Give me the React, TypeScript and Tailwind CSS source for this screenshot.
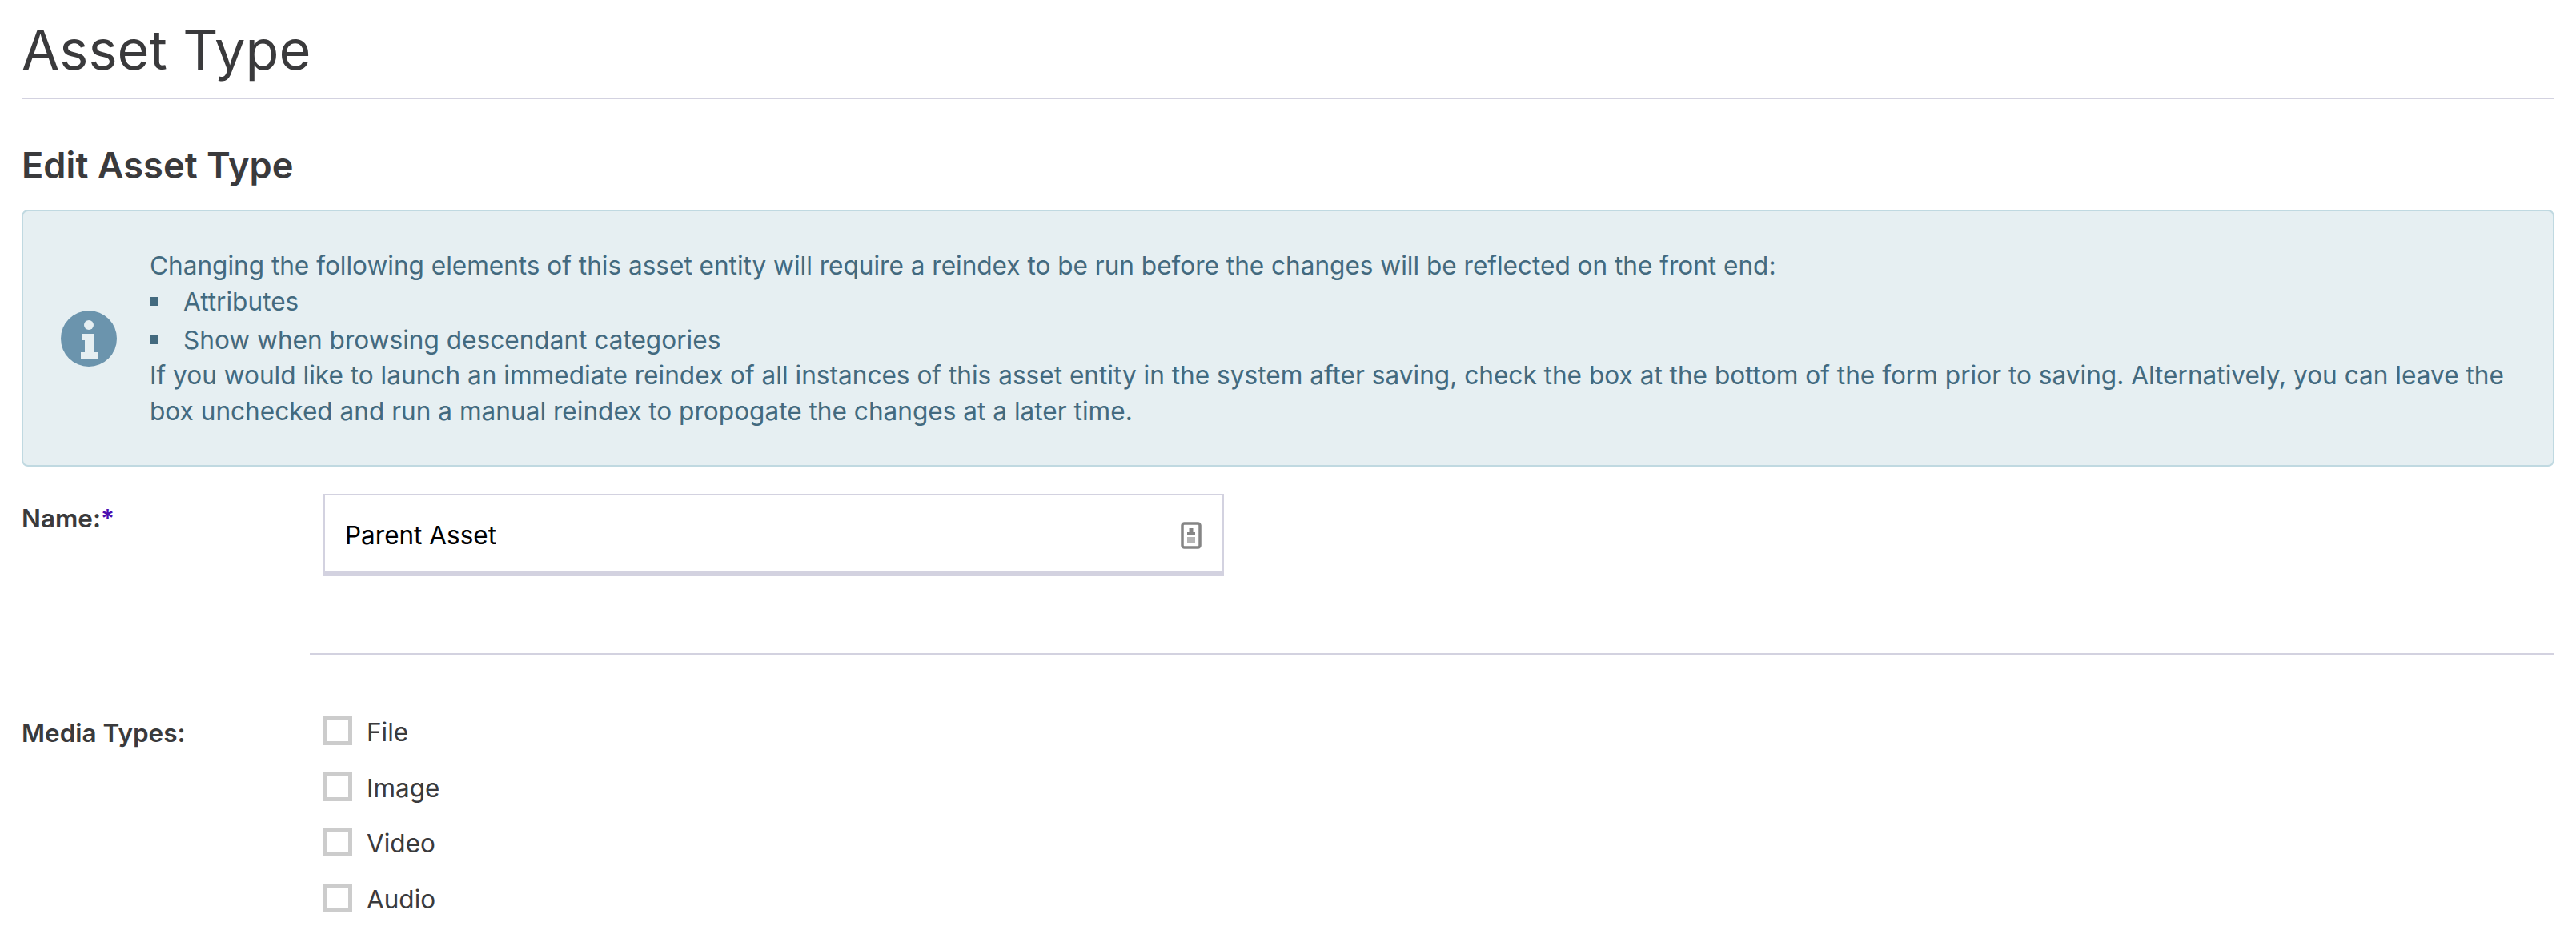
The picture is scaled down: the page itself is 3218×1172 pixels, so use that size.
export default function App() {
  const font = { fontFamily: 'Inter, "Liberation Sans", sans-serif' };
  return (
    <div style={font} className="w-[3218px] h-[1172px] overflow-hidden bg-white pl-[27px] pr-[27px] text-[#3a3a3c]">
      <h1 className="h-[124px] border-b-[2px] border-[#d3d2e0] pt-[25px] text-[68.5px] leading-[76px] font-normal">Asset Type</h1>
      <h2 className="mt-[57px] text-[45.2px] leading-[52px] font-semibold">Edit Asset Type</h2>
      <div className="mt-[29px] flex h-[321px] items-center rounded-[8px] border-[2px] border-[#c0d9e1] bg-[#e6eff2] pl-[46px] pr-[46px] text-[31.6px] leading-[45px] text-[#436a7f]">
        <svg className="mr-[40px] h-[72px] w-[72px] shrink-0" viewBox="0 0 72 72">
          <circle cx="36" cy="36" r="35" fill="#6b94ad" />
          <circle cx="36" cy="19" r="6" fill="#e6eff2" />
          <path d="M27 30h15v23h5v8H26v-8h5V38h-4z" fill="#e6eff2" />
        </svg>
        <div className="min-w-0 flex-1">
          <div className="text-[31.55px]">Changing the following elements of this asset entity will require a reindex to be run before the changes will be reflected on the front end:</div>
          <ul className="list-none">
            <li className="flex h-[44px] items-center"><span className="mr-[31px] h-[11px] w-[11px] bg-[#436a7f]" />Attributes</li>
            <li className="mt-[4px] flex h-[45px] items-center"><span className="mr-[31px] h-[11px] w-[11px] bg-[#436a7f]" />Show when browsing descendant categories</li>
          </ul>
          <div className="leading-[44.5px]">If you would like to launch an immediate reindex of all instances of this asset entity in the system after saving, check the box at the bottom of the form prior to saving. Alternatively, you can leave the box unchecked and run a manual reindex to propogate the changes at a later time.</div>
        </div>
      </div>
      <div className="mt-[34px] flex">
        <div className="w-[377px] shrink-0 pt-[11px] text-[31.5px] leading-[40px] font-semibold">Name:<span className="text-[#4b0fb0]">*</span></div>
        <div className="flex h-[103px] w-[1125px] items-center justify-between border-x-[2px] border-t-[2px] border-b-[6px] border-[#d3d2e0] bg-white pl-[25px] pr-[26px] text-[31.5px] text-black">
          <span className="relative top-[2px]">Parent Asset</span>
          <svg className="relative top-[2px] h-[34px] w-[26px]" viewBox="0 0 26 34">
            <rect x="2" y="2" width="22" height="30" rx="2.500" fill="#fff" stroke="#858585" strokeWidth="3.500" />
            <path d="M10.500 8h5v5h2.500v4H8v-4h2.500z" fill="#858585" />
            <rect x="8" y="19" width="10" height="7" fill="#b5b5b5" />
          </svg>
        </div>
      </div>
      <div className="ml-[360px] mt-[96px] h-[2px] bg-[#d3d2e0]" />
      <div className="mt-[75px] flex">
        <div className="w-[377px] shrink-0 pt-[3px] text-[31.5px] leading-[40px] font-semibold">Media Types:</div>
        <div className="flex flex-col gap-[29.500px]">
          {["File", "Image", "Video", "Audio"].map((t) => (
            <label key={t} className="flex h-[40px] items-center text-[31.5px]">
              <span className="mr-[18px] h-[36px] w-[36px] border-[5px] border-[#cccccc] bg-white" />
              <span className="relative top-[2px]">{t}</span>
            </label>
          ))}
        </div>
      </div>
    </div>
  );
}
